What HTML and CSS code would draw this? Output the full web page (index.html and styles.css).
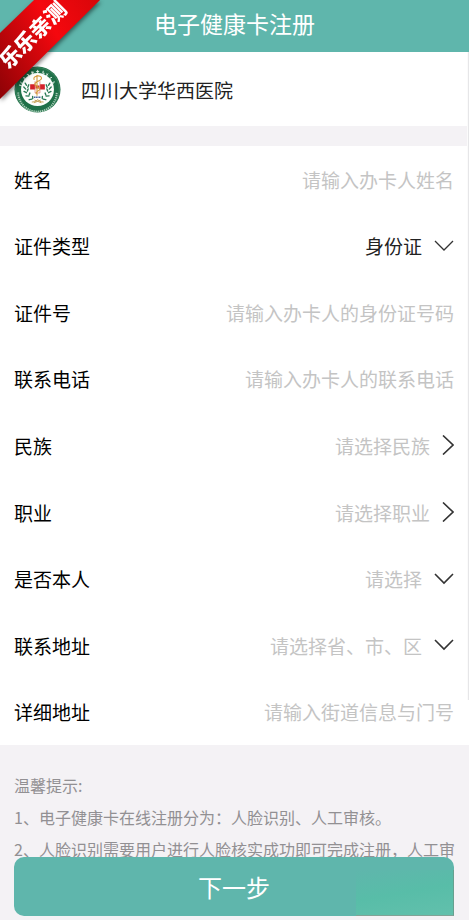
FILE: index.html
```html
<!DOCTYPE html>
<html lang="zh-CN">
<head>
<meta charset="utf-8">
<meta name="viewport" content="width=device-width, initial-scale=1">
<title>电子健康卡注册</title>
<link rel="stylesheet" href="styles.css">
</head>
<body>
<div class="page">
  <header class="topbar"><h1 class="topbar-title">电子健康卡注册</h1></header>

  <section class="hospital">
    <svg class="hospital-logo" viewBox="0 0 48 48" aria-hidden="true">
      <circle cx="24" cy="24" r="23.5" fill="#1f7048"/>
      <circle cx="24" cy="24" r="22.3" fill="none" stroke="#5d9a79" stroke-width=".5"/>
      <circle cx="24" cy="24" r="16.8" fill="#fdfefc"/>
      <path d="M4.4 27A19.6 19.6 0 1 0 43.6 27" fill="none" stroke="#a9cbb7" stroke-width="2" stroke-dasharray="1.3 .9"/>
      <g fill="none" stroke="#e4f0e8" stroke-width="1" stroke-linecap="round">
        <path d="M5.5 19.5l2 .5M6.6 16.4l1.6 1.5M9.6 12l1.8.3-.5 1.5M13.4 8.5l1.5.4-.2 1.4M18.4 5.6l.5 2.2M17.8 7l2.1-.6M24.2 4.4v2.6M23 5.7h2.3M29.8 5.3l-.4 2.1 1.4.1M34.4 8l-1.5 1.9M33.3 8.2l1.3 1.2M38.4 11.7l-2 .9.9 1M41.3 16.3l-1.9.5.5 1.2"/>
      </g>
      <g fill="none" stroke="#2b7b56" stroke-width="1.4" stroke-linecap="round">
        <path d="M11.4 17.5l1.4 2.2M10 21.5l2 2.1M10.2 26l2.5 1.3M12.2 30.5l2.9.3M15.5 34.4l2.8-.5M15.1 19.2l-1 2.6M14.4 23.5l-.8 2.2M16.2 27.6l-.7 2M19 31l.2 2"/>
        <path d="M36.6 17.5l-1.4 2.2M38 21.5l-2 2.1M37.8 26l-2.5 1.3M35.8 30.5l-2.9.3M32.5 34.4l-2.8-.5M32.9 19.2l1 2.6M33.6 23.5l.8 2.2M31.8 27.6l.7 2M29 31l-.2 2"/>
      </g>
      <path d="M16.5 18.6h5v5.4h-5zM26.5 18.6h5v5.4h-5zM22 20h4v3h-4z" fill="#d3222a"/>
      <path d="M21.5 15.5v12h5v-12" fill="none" stroke="#de7468" stroke-width=".7"/>
      <path d="M23.5 9.4v20.5M20.5 13.7c-1.7-3.5 7.4-5.4 7.6-1.3.1 3.2-7 3.1-6.8 6.1.2 2.6 5.2 2.4 4.9 5.2-.2 2.2-4 2-3.7 4" fill="none" stroke="#d49a3a" stroke-width="1.1" stroke-linecap="round"/>
      <path d="M20.5 32h7" stroke="#3a5797" stroke-width="1.5" stroke-dasharray="1.2 .5"/>
      <path d="M18.2 36.8c3.7 0 5.5-1.5 6-2.6.7 1.1 2.4 2.6 6 2.6M21 34.8l7 2.8M27.3 34.8l-7 2.8" fill="none" stroke="#c6a359" stroke-width="1"/>
    </svg>
    <span class="hospital-name">四川大学华西医院</span>
  </section>

  <form class="form" id="register">
    <div class="row"><label class="label" for="name">姓名</label><input class="field" id="name" type="text" placeholder="请输入办卡人姓名"></div>
    <div class="row"><label class="label" for="idtype">证件类型</label>
      <select class="field chosen" id="idtype"><option>身份证</option></select>
      <svg class="chevron down thin" viewBox="0 0 20 12" aria-hidden="true"><path d="M1 1l9 9 9-9"/></svg></div>
    <div class="row"><label class="label" for="idno">证件号</label><input class="field" id="idno" type="text" placeholder="请输入办卡人的身份证号码"></div>
    <div class="row"><label class="label" for="phone">联系电话</label><input class="field" id="phone" type="tel" placeholder="请输入办卡人的联系电话"></div>
    <div class="row"><label class="label" for="nation">民族</label>
      <button class="field" id="nation" type="button">请选择民族</button>
      <svg class="chevron next" viewBox="0 0 12 20" aria-hidden="true"><path d="M1 .5L11 10 1 19.5"/></svg></div>
    <div class="row"><label class="label" for="job">职业</label>
      <button class="field" id="job" type="button">请选择职业</button>
      <svg class="chevron next" viewBox="0 0 12 20" aria-hidden="true"><path d="M1 .5L11 10 1 19.5"/></svg></div>
    <div class="row"><label class="label" for="self">是否本人</label>
      <select class="field" id="self"><option>请选择</option></select>
      <svg class="chevron down" viewBox="0 0 20 12" aria-hidden="true"><path d="M1 1l9 9 9-9"/></svg></div>
    <div class="row"><label class="label" for="region">联系地址</label>
      <select class="field" id="region"><option>请选择省、市、区</option></select>
      <svg class="chevron down" viewBox="0 0 20 12" aria-hidden="true"><path d="M1 1l9 9 9-9"/></svg></div>
    <div class="row"><label class="label" for="street">详细地址</label><input class="field" id="street" type="text" placeholder="请输入街道信息与门号"></div>
  </form>

  <section class="tips">
    <p>温馨提示:</p>
    <p>1、电子健康卡在线注册分为：人脸识别、人工审核。</p>
    <p>2、人脸识别需要用户进行人脸核实成功即可完成注册，人工审</p>
  </section>
</div>

<div class="scroll-thumb"></div>
<div class="action"><button class="next-step" type="submit" form="register">下一步</button><span class="action-shade"></span></div>
<div class="ribbon"><div class="ribbon-band"></div><span class="ribbon-text">乐乐亲测</span></div>
</body>
</html>
```

FILE: styles.css
```css
* { box-sizing: border-box; }

body {
  margin: 0;
  background: #f4f2f5;
  color: #222;
  font-family: "Noto Sans CJK SC", sans-serif;
  font-size: 19px;
}

.page {
  min-height: 100vh;
  display: flex;
  flex-direction: column;
}

.topbar {
  height: 52px;
  display: flex;
  align-items: center;
  justify-content: center;
  padding-bottom: 6px;
  background: #5fb6ac;
}

.topbar-title {
  margin: 0;
  color: #fff;
  font-size: 23px;
  font-weight: 400;
  line-height: 32px;
}

.hospital {
  display: flex;
  align-items: center;
  gap: 20px;
  height: 74px;
  padding: 0 14px;
  margin-bottom: 20px;
  background: #fff;
}

.hospital-logo { width: 47px; height: 47px; }

.form {
  flex: 1;
  display: grid;
  grid-auto-rows: 1fr;
  background: #fff;
}

.row {
  display: flex;
  align-items: center;
  padding: 0 15px 0 14px;
}

.label { flex: none; color: #000; }

.field {
  flex: 1;
  min-width: 0;
  height: 32px;
  margin: 0;
  padding: 0;
  border: 0;
  outline: 0;
  background: transparent;
  color: #c4c4c4;
  font: inherit;
  text-align: right;
  text-align-last: right;
  appearance: none;
}

input.field { color: #222; }
.field::placeholder { color: #c4c4c4; opacity: 1; }
.field.chosen { color: #222; }

.chevron {
  flex: none;
  fill: none;
  stroke: #333;
  stroke-width: 1.6;
}

.chevron.thin { stroke-width: 1.3; }
.down { width: 20px; height: 12px; margin-left: 12px; }
.next { width: 12px; height: 20px; margin-left: 12px; }

.tips {
  min-height: 175px;
  padding: 24px 14px 54px;
  color: #929093;
  font-size: 16px;
  line-height: 32px;
}

.tips p { margin: 0; white-space: nowrap; }

.action {
  position: fixed;
  left: 14px;
  right: 15px;
  bottom: 4px;
  height: 59px;
}

.next-step {
  width: 100%;
  height: 100%;
  padding: 0;
  border: 0;
  border-radius: 10px 10px 0 10px;
  background: #5fb6ac;
  color: #fff;
  font: inherit;
  font-size: 24px;
}

.action-shade {
  position: absolute;
  right: 0;
  bottom: 0;
  width: 98px;
  height: 46px;
  border-right: 1px solid #67a08f;
  border-bottom: 1px solid #82a296;
  background: linear-gradient(170deg, #5fb6ac, #58bda8 50%, #62c0ac);
}

.scroll-thumb {
  position: fixed;
  top: 52px;
  right: 0;
  width: 2px;
  height: 648px;
  border-left: 1px solid #fbfbfb;
  background: #e6e6e8;
}

.ribbon {
  position: fixed;
  top: 0;
  left: 0;
  width: 110px;
  height: 110px;
  filter: drop-shadow(1px 2px 2px rgba(0, 0, 0, .5));
  pointer-events: none;
}

.ribbon-band {
  width: 100px;
  height: 100px;
  clip-path: polygon(34px 0, 100px 0, 0 99px, 0 33px);
  background: linear-gradient(60deg, #8c0206, #c8060b 35%, #f5080e 60%, #d8060a);
}

.ribbon-text {
  position: absolute;
  top: 18px;
  left: -10px;
  color: #fff;
  font-size: 21px;
  font-weight: 900;
  line-height: 32px;
  white-space: nowrap;
  transform: rotate(-45deg);
}
```
